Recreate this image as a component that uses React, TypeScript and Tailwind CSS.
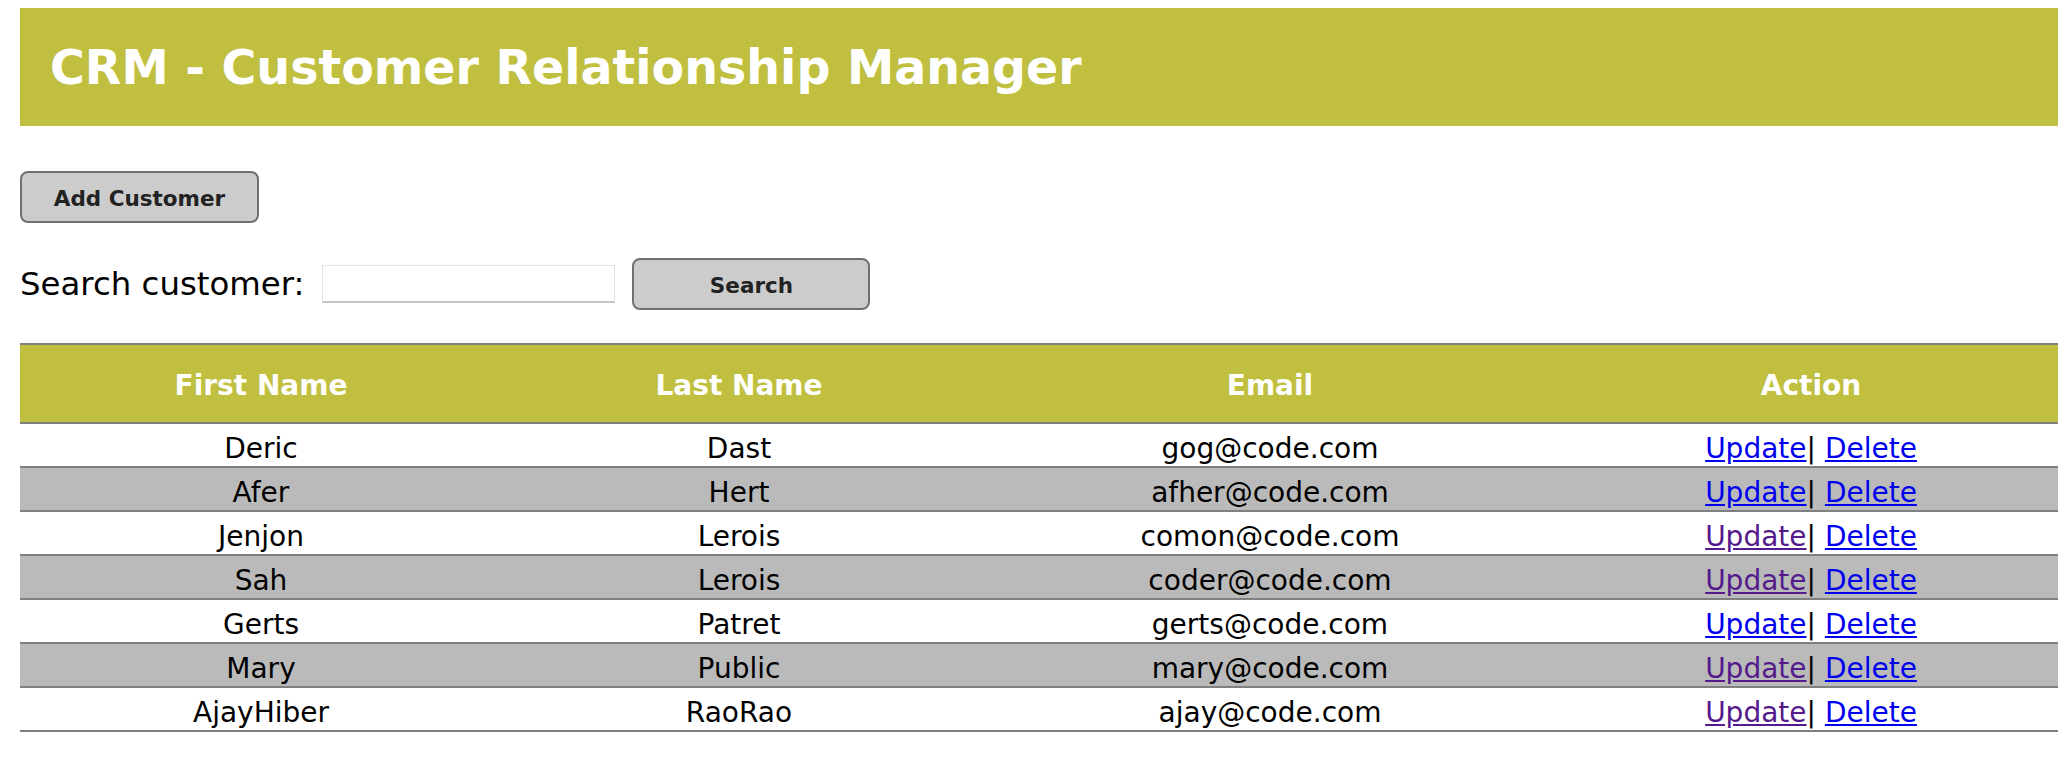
const customers = [
  { first: "Deric", last: "Dast", email: "gog@code.com", visited: false },
  { first: "Afer", last: "Hert", email: "afher@code.com", visited: false },
  { first: "Jenjon", last: "Lerois", email: "comon@code.com", visited: true },
  { first: "Sah", last: "Lerois", email: "coder@code.com", visited: true },
  { first: "Gerts", last: "Patret", email: "gerts@code.com", visited: false },
  { first: "Mary", last: "Public", email: "mary@code.com", visited: true },
  { first: "AjayHiber", last: "RaoRao", email: "ajay@code.com", visited: true },
];

const App = () => (
  <div className="min-h-screen bg-white pt-[8px] pl-[20px] overflow-hidden font-['DejaVu_Sans',Verdana,sans-serif] text-black">
    <div className="h-[118px] bg-[#c0bf40] flex items-center pl-[30px]">
      <h1 className="text-[47.5px] font-bold text-white leading-none mt-[2px]">
        CRM - Customer Relationship Manager
      </h1>
    </div>

    <div className="mt-[45px]">
      <button className="w-[239px] h-[52px] pt-[4px] bg-[#cccccc] border-2 border-[#707070] rounded-[8px] text-[21.5px] font-bold text-[#222]">
        Add Customer
      </button>
    </div>

    <div className="mt-[35px] flex items-center">
      <span className="text-[32.4px]">Search customer:</span>
      <input
        type="text"
        className="ml-[18px] w-[293px] h-[38px] bg-white border border-[#e3e3e3] border-b-2 border-b-[#c6c6c6] outline-none"
      />
      <button className="ml-[17px] w-[238px] h-[52px] pt-[4px] bg-[#cccccc] border-2 border-[#707070] rounded-[8px] text-[21.5px] font-bold text-[#222]">
        Search
      </button>
    </div>

    <table className="mt-[33px] w-[2038px] table-fixed border-separate border-spacing-0 text-[28px]">
      <thead>
        <tr className="bg-[#c0bf40] text-white">
          <th className="w-[482px] h-[81px] pt-[5px] pb-0 px-0 border-y-2 border-[#808080] font-bold">First Name</th>
          <th className="w-[474px] h-[81px] pt-[5px] pb-0 px-0 border-y-2 border-[#808080] font-bold">Last Name</th>
          <th className="w-[588px] h-[81px] pt-[5px] pb-0 px-0 border-y-2 border-[#808080] font-bold">Email</th>
          <th className="w-[494px] h-[81px] pt-[5px] pb-0 px-0 border-y-2 border-[#808080] font-bold">Action</th>
        </tr>
      </thead>
      <tbody>
        {customers.map((c, i) => (
          <tr key={i} className={i % 2 === 1 ? "bg-[#bababa]" : "bg-white"}>
            <td className="h-[44px] pt-[7px] pb-0 px-0 leading-[30px] text-center border-b-2 border-[#808080]">{c.first}</td>
            <td className="h-[44px] pt-[7px] pb-0 px-0 leading-[30px] text-center border-b-2 border-[#808080]">{c.last}</td>
            <td className="h-[44px] pt-[7px] pb-0 px-0 leading-[30px] text-center border-b-2 border-[#808080]">{c.email}</td>
            <td className="h-[44px] pt-[7px] pb-0 px-0 leading-[30px] text-center border-b-2 border-[#808080]">
              <a href="#" className={`underline ${c.visited ? "text-[#551a8b]" : "text-[#0000ee]"}`}>
                Update
              </a>
              |{" "}
              <a href="#" className="underline text-[#0000ee]">
                Delete
              </a>
            </td>
          </tr>
        ))}
      </tbody>
    </table>
  </div>
);

export default App;
